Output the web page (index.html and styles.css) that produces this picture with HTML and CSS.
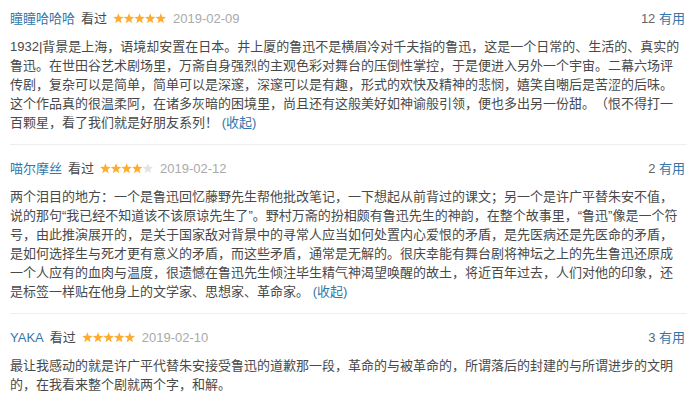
FILE: index.html
```html
<!DOCTYPE html>
<html lang="zh-CN">
<head>
<meta charset="utf-8">
<title>短评</title>
<link rel="stylesheet" href="styles.css">
</head>
<body>
<svg class="defs" width="0" height="0" aria-hidden="true">
  <defs>
    <polygon id="star" points="0,-5.5 1.35,-1.86 5.23,-1.7 2.19,0.71 3.23,4.45 0,2.3 -3.23,4.45 -2.19,0.71 -5.23,-1.7 -1.35,-1.86"/>
  </defs>
</svg>
<div class="reviews">
  <div class="review">
    <div class="head">
      <a class="user">瞳瞳哈哈哈</a>
      <span class="seen">看过</span>
      <svg class="stars" viewBox="0 0 53 11" width="53" height="11">
        <use href="#star" x="5.4" y="5.7" class="on"/>
        <use href="#star" x="16" y="5.7" class="on"/>
        <use href="#star" x="26.6" y="5.7" class="on"/>
        <use href="#star" x="37.2" y="5.7" class="on"/>
        <use href="#star" x="47.8" y="5.7" class="on"/>
      </svg>
      <span class="date">2019-02-09</span>
      <span class="votes"><span class="count">12</span> <a class="useful">有用</a></span>
    </div>
    <p class="content">1932|背景是上海，语境却安置在日本。井上厦的鲁迅不是横眉冷对千夫指的鲁迅，这是一个日常的、生活的、真实的鲁迅。在世田谷艺术剧场里，万斋自身强烈的主观色彩对舞台的压倒性掌控，于是便进入另外一个宇宙。二幕六场评传剧，复杂可以是简单，简单可以是深邃，深邃可以是有趣，形式的欢快及精神的悲悯，嬉笑自嘲后是苦涩的后味。这个作品真的很温柔阿，在诸多灰暗的困境里，尚且还有这般美好如神谕般引领，便也多出另一份甜。（恨不得打一百颗星，看了我们就是好朋友系列！ <a class="fold">(收起)</a></p>
  </div>
  <div class="review">
    <div class="head">
      <a class="user">喵尔摩丝</a>
      <span class="seen">看过</span>
      <svg class="stars" viewBox="0 0 53 11" width="53" height="11">
        <use href="#star" x="5.4" y="5.7" class="on"/>
        <use href="#star" x="16" y="5.7" class="on"/>
        <use href="#star" x="26.6" y="5.7" class="on"/>
        <use href="#star" x="37.2" y="5.7" class="on"/>
        <use href="#star" x="47.8" y="5.7" class="off"/>
      </svg>
      <span class="date">2019-02-12</span>
      <span class="votes"><span class="count">2</span> <a class="useful">有用</a></span>
    </div>
    <p class="content">两个泪目的地方：一个是鲁迅回忆藤野先生帮他批改笔记，一下想起从前背过的课文；另一个是许广平替朱安不值，说的那句<q>我已经不知道该不该原谅先生了</q>。野村万斋的扮相颇有鲁迅先生的神韵，在整个故事里，<q>鲁迅</q>像是一个符号，由此推演展开的，是关于国家敌对背景中的寻常人应当如何处置内心爱恨的矛盾，是先医病还是先医命的矛盾，是如何选择生与死才更有意义的矛盾，而这些矛盾，通常是无解的。很庆幸能有舞台剧将神坛之上的先生鲁迅还原成一个人应有的血肉与温度，很遗憾在鲁迅先生倾注毕生精气神渴望唤醒的故土，将近百年过去，人们对他的印象，还是标签一样贴在他身上的文学家、思想家、革命家。 <a class="fold">(收起)</a></p>
  </div>
  <div class="review">
    <div class="head">
      <a class="user">YAKA</a>
      <span class="seen">看过</span>
      <svg class="stars" viewBox="0 0 53 11" width="53" height="11">
        <use href="#star" x="5.4" y="5.7" class="on"/>
        <use href="#star" x="16" y="5.7" class="on"/>
        <use href="#star" x="26.6" y="5.7" class="on"/>
        <use href="#star" x="37.2" y="5.7" class="on"/>
        <use href="#star" x="47.8" y="5.7" class="on"/>
      </svg>
      <span class="date">2019-02-10</span>
      <span class="votes"><span class="count">3</span> <a class="useful">有用</a></span>
    </div>
    <p class="content">最让我感动的就是许广平代替朱安接受鲁迅的道歉那一段，革命的与被革命的，所谓落后的封建的与所谓进步的文明的，在我看来整个剧就两个字，和解。</p>
  </div>
</div>
</body>
</html>
```
FILE: styles.css
```css
html, body {
  margin: 0;
  padding: 0;
  background: #fff;
}

body {
  font-family: "Liberation Sans", "Noto Sans CJK SC", sans-serif;
  font-size: 13px;
  color: #494949;
  text-spacing-trim: space-all;
}

.defs {
  position: absolute;
  width: 0;
  height: 0;
  overflow: hidden;
}

.reviews {
  padding: 0 10px;
}

.review {
  padding: 14px 0 12px;
  border-bottom: 1px solid #eeeeee;
}

.review:first-child {
  padding-top: 9px;
}

.head {
  display: flex;
  align-items: center;
  height: 20px;
  line-height: 20px;
  padding-right: 2px;
}

.user {
  color: #3377aa;
  margin-right: 6px;
}

.seen {
  color: #494949;
  margin-right: 6px;
}

.stars {
  display: block;
  margin-right: 7px;
  margin-top: -1px;
}

.stars .on {
  fill: #ffac2d;
}

.stars .off {
  fill: #e3e3e3;
}

.date {
  color: #aaaaaa;
}

.votes {
  margin-left: auto;
  color: #666666;
}

.useful {
  color: #3377aa;
}

.content {
  margin: 8px 0 0;
  padding-right: 5px;
  line-height: 19px;
}

.content q {
  quotes: "\201C" "\201D";
}

.fold {
  color: #3377aa;
}
```
